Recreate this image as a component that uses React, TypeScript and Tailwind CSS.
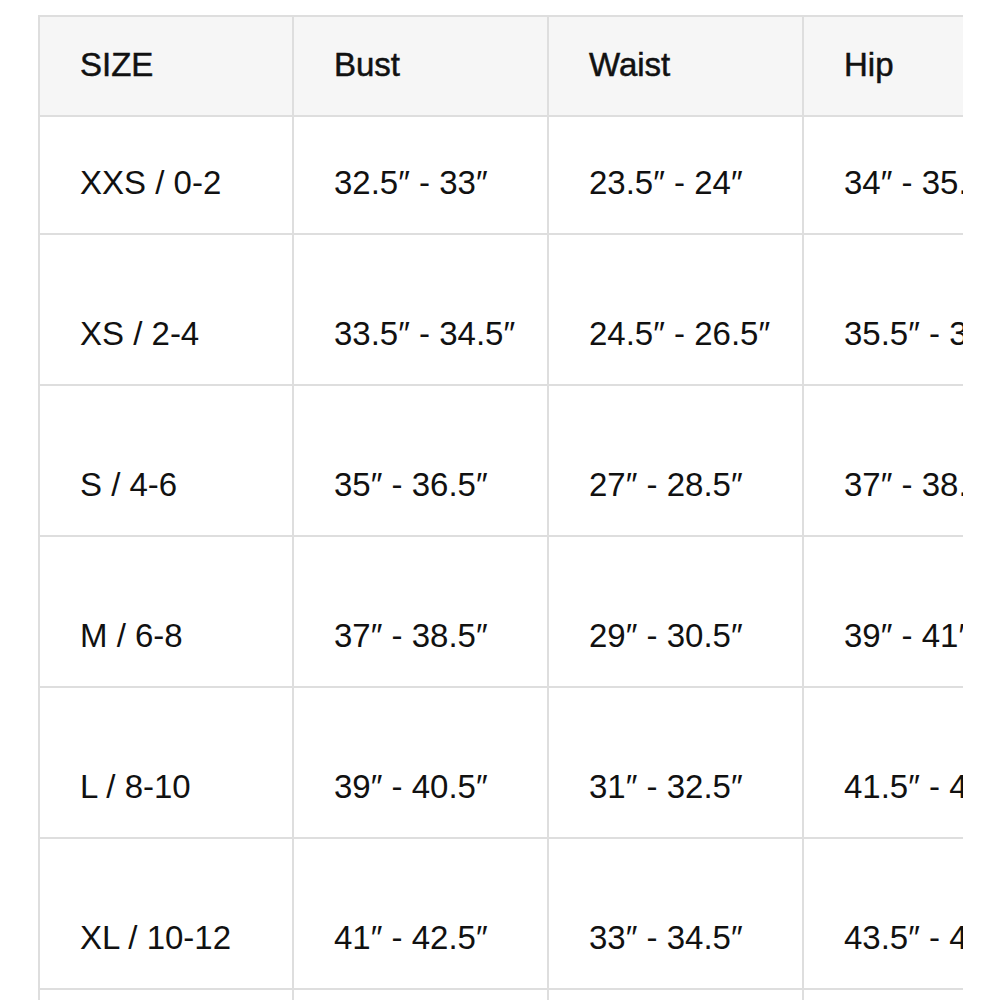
import React from "react";

const headers = ["SIZE", "Bust", "Waist", "Hip", "Inseam"];

const rows: string[][] = [
  ["XXS / 0-2", "32.5″ - 33″", "23.5″ - 24″", "34″ - 35.5″", "30″"],
  ["XS / 2-4", "33.5″ - 34.5″", "24.5″ - 26.5″", "35.5″ - 37″", "30″"],
  ["S / 4-6", "35″ - 36.5″", "27″ - 28.5″", "37″ - 38.5″", "30″"],
  ["M / 6-8", "37″ - 38.5″", "29″ - 30.5″", "39″ - 41″", "30″"],
  ["L / 8-10", "39″ - 40.5″", "31″ - 32.5″", "41.5″ - 43″", "30″"],
  ["XL / 10-12", "41″ - 42.5″", "33″ - 34.5″", "43.5″ - 45″", "30″"],
  ["XXL / 12-14", "43″ - 44.5″", "35″ - 36.5″", "45.5″ - 47″", "30″"],
];

function Cell({ first, children }: { first: boolean; children: React.ReactNode }) {
  return (
    <div
      className={
        "shrink-0 border-r-2 border-[#dedede] pl-10 flex " +
        (first ? "w-[254px]" : "w-[255px]")
      }
    >
      {children}
    </div>
  );
}

export default function App() {
  return (
    <div
      className="h-[1000px] w-[1000px] overflow-hidden bg-white pl-[38px] pt-[15px] text-[#111111]"
      style={{ fontFamily: '"Liberation Sans", Arial, sans-serif' }}
    >
      <div className="w-[925px] overflow-hidden">
        <div className="w-max border-l-2 border-t-2 border-[#dedede] text-[33px] leading-none">
          <div className="flex h-[100px] border-b-2 border-[#dedede] bg-[#f6f6f6]">
            {headers.map((h, j) => (
              <Cell key={h} first={j === 0}>
                <span className="self-center pb-[3px] [-webkit-text-stroke:0.5px_#111111]">
                  {h}
                </span>
              </Cell>
            ))}
          </div>
          {rows.map((r, i) => (
            <div
              key={r[0]}
              className={
                "flex border-b-2 border-[#dedede] " +
                (i === 0 ? "h-[118px]" : "h-[151px]")
              }
            >
              {r.map((v, j) => (
                <Cell key={j} first={j === 0}>
                  <span className="self-end pb-[34px] whitespace-nowrap">
                    {v}
                  </span>
                </Cell>
              ))}
            </div>
          ))}
        </div>
      </div>
    </div>
  );
}
